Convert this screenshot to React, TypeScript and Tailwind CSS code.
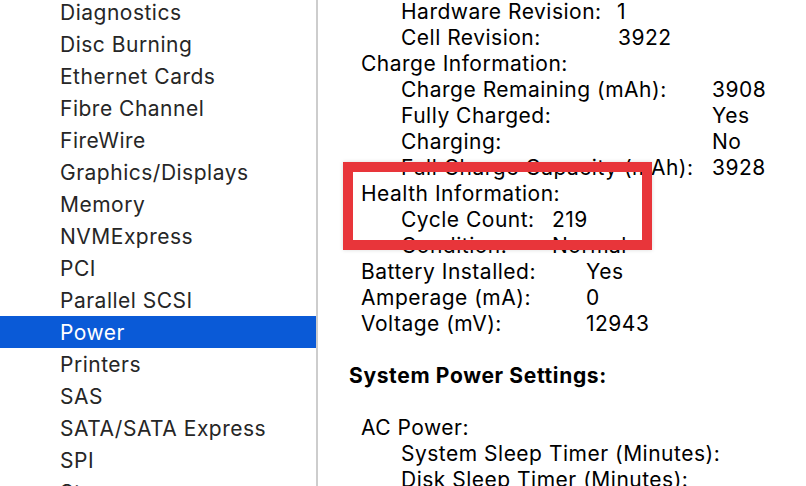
const sidebarItems = [
  "Diagnostics",
  "Disc Burning",
  "Ethernet Cards",
  "Fibre Channel",
  "FireWire",
  "Graphics/Displays",
  "Memory",
  "NVMExpress",
  "PCI",
  "Parallel SCSI",
  "Power",
  "Printers",
  "SAS",
  "SATA/SATA Express",
  "SPI",
  "Storage",
];

type Row = { label: string; value?: string; indent: 0 | 1 | 2; col?: string; bold?: boolean; gap?: boolean };

const rows: Row[] = [
  { label: "Hardware Revision:", value: "1", indent: 2, col: "w-[216px]" },
  { label: "Cell Revision:", value: "3922", indent: 2, col: "w-[217px]" },
  { label: "Charge Information:", indent: 1 },
  { label: "Charge Remaining (mAh):", value: "3908", indent: 2, col: "w-[311px]" },
  { label: "Fully Charged:", value: "Yes", indent: 2, col: "w-[311px]" },
  { label: "Charging:", value: "No", indent: 2, col: "w-[311px]" },
  { label: "Full Charge Capacity (mAh):", value: "3928", indent: 2, col: "w-[311px]" },
  { label: "Health Information:", indent: 1 },
  { label: "Cycle Count:", value: "219", indent: 2, col: "w-[151px]" },
  { label: "Condition:", value: "Normal", indent: 2, col: "w-[151px]" },
  { label: "Battery Installed:", value: "Yes", indent: 1, col: "w-[225px]" },
  { label: "Amperage (mA):", value: "0", indent: 1, col: "w-[225px]" },
  { label: "Voltage (mV):", value: "12943", indent: 1, col: "w-[225px]" },
  { label: "", indent: 1, gap: true },
  { label: "System Power Settings:", indent: 0, bold: true },
  { label: "", indent: 1, gap: true },
  { label: "AC Power:", indent: 1 },
  { label: "System Sleep Timer (Minutes):", indent: 2 },
  { label: "Disk Sleep Timer (Minutes):", indent: 2 },
];

const indentClass = { 0: "pl-[31px]", 1: "pl-[43px]", 2: "pl-[83px]" };

export default function App() {
  return (
    <div className="flex h-[486px] w-[806px] overflow-hidden bg-white font-['Inter','Liberation_Sans',sans-serif]">
      <div className="w-[316px] shrink-0">
        <ul className="-mt-[4px]">
          {sidebarItems.map((item) => (
            <li
              key={item}
              className={`flex h-[32px] items-center pl-[60px] pt-[2px] text-[21px] tracking-[0.5px] ${
                item === "Power" ? "bg-[#0a5ad7] text-white" : "text-[#262626]"
              }`}
            >
              {item}
            </li>
          ))}
        </ul>
      </div>
      <div className="w-[2px] shrink-0 bg-[#cdcdcd]" />
      <div className="relative flex-1">
        <div className="-mt-[2px]">
          {rows.map((row, i) => (
            <div
              key={i}
              className={`flex h-[26px] items-center pt-[2px] text-[21px] text-black ${indentClass[row.indent]} ${
                row.bold ? "font-bold tracking-[0.65px]" : "tracking-[0.5px]"
              }`}
            >
              {row.gap ? null : row.value !== undefined ? (
                <>
                  <span className={`${row.col} shrink-0 whitespace-nowrap`}>{row.label}</span>
                  <span className="whitespace-nowrap">{row.value}</span>
                </>
              ) : (
                <span className="whitespace-nowrap">{row.label}</span>
              )}
            </div>
          ))}
        </div>
        <div className="pointer-events-none absolute left-[25px] top-[162px] h-[88px] w-[309px] border-[10px] border-[#e8353a] shadow-[0_0_4px_rgba(0,0,0,0.15)]" />
      </div>
    </div>
  );
}
